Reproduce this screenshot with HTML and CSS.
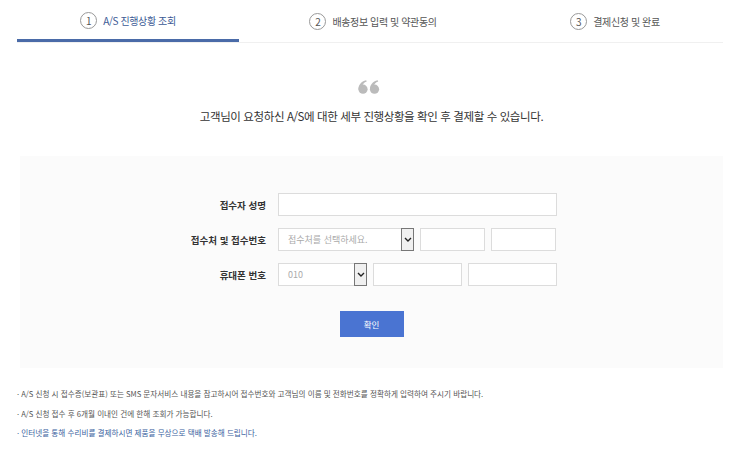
FILE: index.html
```html
<!DOCTYPE html>
<html lang="ko">
<head>
    <meta charset="UTF-8">
    <title>A/S 진행상황 조회</title>
    <link rel="stylesheet" href="styles.css">
</head>
<body>

<ul class="steps">
    <li class="step active"><span class="num">1</span>A/S 진행상황 조회</li>
    <li class="step step-2"><span class="num">2</span>배송정보 입력 및 약관동의</li>
    <li class="step step-3"><span class="num">3</span>결제신청 및 완료</li>
</ul>

<div class="intro">
    <div class="quote">
        <svg width="22" height="14" viewBox="0 0 22 14">
            <g fill="#bbb">
                <circle cx="5" cy="9.2" r="4.6"/>
                <path d="M0.5 9.5C0.3 5 3 1.6 8.2 0.3L8.7 1.6C6 2.6 4.6 4.3 4.3 6.2Z"/>
                <circle cx="16.5" cy="9.2" r="4.6"/>
                <path d="M12 9.5C11.8 5 14.5 1.6 19.7 0.3L20.2 1.6C17.5 2.6 16.1 4.3 15.8 6.2Z"/>
            </g>
        </svg>
    </div>
    <p>고객님이 요청하신 A/S에 대한 세부 진행상황을 확인 후 결제할 수 있습니다.</p>
</div>

<div class="panel">
    <div class="form">
        <label class="label">접수자 성명</label>
        <div class="fields">
            <input type="text" class="field full">
        </div>

        <label class="label">접수처 및 접수번호</label>
        <div class="fields">
            <div class="select wide">
                <span class="value">접수처를 선택하세요.</span>
                <span class="arrow"><svg width="8" height="5" viewBox="0 0 8 5"><path d="M1 1l3 3 3-3" fill="none" stroke="#222" stroke-width="1.4"/></svg></span>
            </div>
            <input type="text" class="field small">
            <input type="text" class="field small">
        </div>

        <label class="label">휴대폰 번호</label>
        <div class="fields">
            <div class="select narrow">
                <span class="value">010</span>
                <span class="arrow"><svg width="8" height="5" viewBox="0 0 8 5"><path d="M1 1l3 3 3-3" fill="none" stroke="#222" stroke-width="1.4"/></svg></span>
            </div>
            <input type="text" class="field medium">
            <input type="text" class="field medium">
        </div>
    </div>
    <div class="actions">
        <a href="#" class="btn">확인</a>
    </div>
</div>

<ul class="notes">
    <li>A/S 신청 시 접수증(보관표) 또는 SMS 문자서비스 내용을 참고하시어 접수번호와 고객님의 이름 및 전화번호를 정확하게 입력하여 주시기 바랍니다.</li>
    <li>A/S 신청 접수 후 6개월 이내인 건에 한해 조회가 가능합니다.</li>
    <li class="blue">인터넷을 통해 수리비를 결제하시면 제품을 무상으로 택배 발송해 드립니다.</li>
</ul>

</body>
</html>
```

FILE: styles.css
```css
body {
    margin: 0;
    padding: 0;
    background: #fff;
    color: #333;
    font-family: "Noto Sans CJK KR", "Noto Sans", sans-serif;
    width: 743px;
}
.steps {
    list-style: none;
    margin: 0 20px 0 17px;
    padding: 0;
    display: flex;
    border-bottom: 1px solid #f0f0f0;
    height: 42px;
}
.step {
    display: flex;
    align-items: center;
    justify-content: center;
    font-size: 10px;
    color: #555;
    height: 41px;
    padding-top: 1px;
    box-sizing: border-box;
    width: 222px;
    letter-spacing: -0.4px;
}
.step-2 {
    width: 268px;
}
.step-3 {
    width: 216px;
}
.step.active {
    color: #3b5a95;
    border-bottom: 3px solid #4a6ba8;
    height: 42px;
    margin-bottom: -1px;
}
.num {
    display: inline-flex;
    align-items: center;
    justify-content: center;
    width: 15px;
    height: 15px;
    border: 1px solid #999;
    border-radius: 50%;
    font-size: 10px;
    color: #555;
    margin-right: 6px;
    letter-spacing: 0;
}
.intro {
    text-align: center;
    padding-top: 37px;
    height: 113px;
    box-sizing: border-box;
}
.quote {
    height: 14px;
    line-height: 0;
    padding-right: 5px;
}
.intro p {
    margin: 14px 0 0;
    font-size: 11.5px;
    line-height: 17px;
    color: #333;
    letter-spacing: -0.4px;
}
.panel {
    margin: 0 20px;
    background: #fbfbfb;
    padding: 37px 0 31px;
}
.form {
    display: grid;
    grid-template-columns: 246px 279px;
    column-gap: 12px;
    row-gap: 12px;
    align-items: center;
}
.label {
    text-align: right;
    font-size: 9.5px;
    font-weight: bold;
    color: #333;
}
.fields {
    display: flex;
    gap: 6px;
    height: 23px;
}
.field {
    border: 1px solid #dcdcdc;
    background: #fff;
    height: 23px;
    box-sizing: border-box;
    padding: 0 8px;
    margin: 0;
    outline: none;
}
.full {
    width: 279px;
}
.small {
    width: 65px;
}
.medium {
    width: 89px;
}
.select {
    display: flex;
    align-items: stretch;
    border: 1px solid #dcdcdc;
    background: #fff;
    height: 23px;
    box-sizing: border-box;
    font-size: 9px;
    color: #aaa;
}
.select.wide {
    width: 136px;
}
.select.narrow {
    width: 89px;
}
.select .value {
    flex: 1;
    display: flex;
    align-items: center;
    padding-left: 9px;
}
.select .arrow {
    width: 11px;
    border: 1px solid #777;
    margin: -1px -1px -1px 0;
    background: #f0f0f0;
    display: flex;
    align-items: center;
    justify-content: center;
}
.actions {
    display: flex;
    justify-content: center;
    padding-top: 25px;
}
.btn {
    display: block;
    width: 64px;
    height: 26px;
    line-height: 26px;
    text-align: center;
    background: #4a74d2;
    color: #fff;
    font-size: 8.5px;
    text-decoration: none;
}
.notes {
    list-style: none;
    margin: 16px 0 0 17px;
    padding: 0;
    font-size: 7.6px;
    color: #555;
}
.notes li {
    line-height: 19.5px;
}
.notes li::before {
    content: "· ";
}
.notes .blue {
    color: #3a5fa0;
}
```
